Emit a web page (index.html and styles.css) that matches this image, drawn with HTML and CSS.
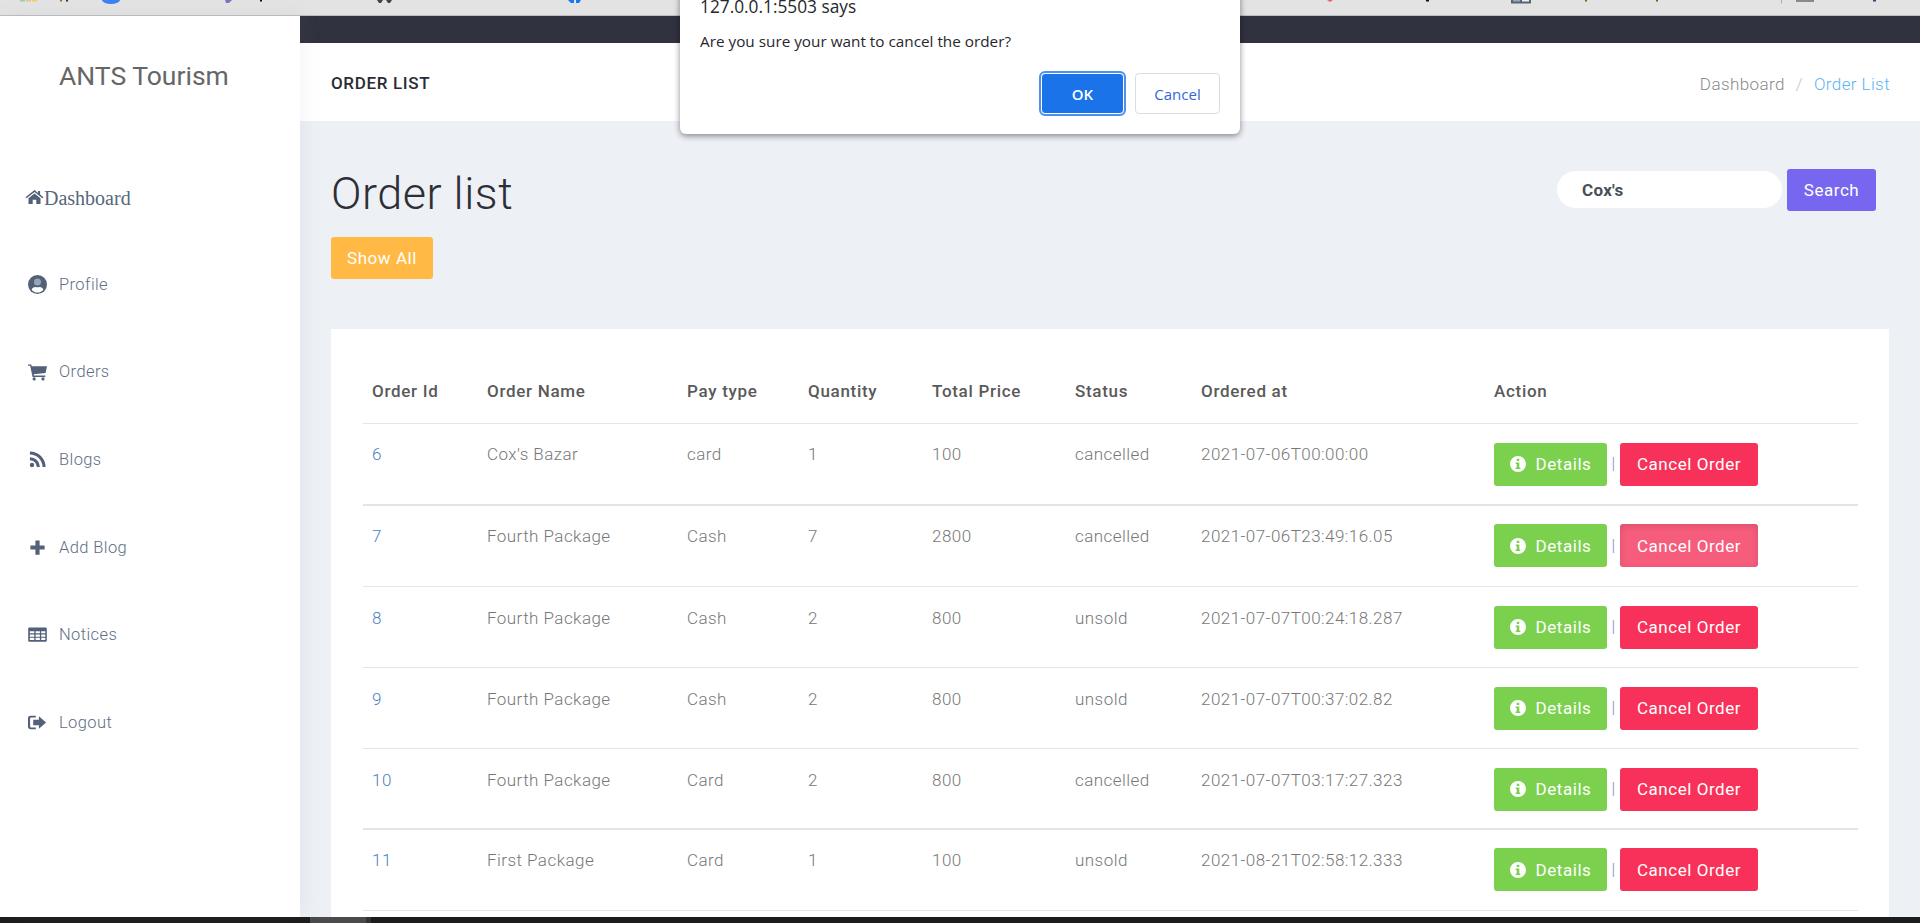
FILE: index.html
```html
<!DOCTYPE html>
<html lang="en">
<head>
<meta charset="utf-8">
<title>Order list</title>
<link rel="stylesheet" href="styles.css">
</head>
<body>
<div class="chrome">
  <svg class="chrome-art" width="1920" height="15" viewBox="0 0 1920 15">
    <rect x="20" y="0" width="5" height="1.5" fill="#9ccf9f"/><rect x="26" y="0" width="5" height="1.5" fill="#f5c07a"/><rect x="32" y="0" width="5" height="1.5" fill="#f4cf6a"/>
    <rect x="60" y="0" width="2" height="1.5" fill="#a56a20"/><rect x="66" y="0" width="2" height="1.5" fill="#333"/>
    <path d="M102 0h18a9 4 0 0 1-18 0z" fill="#3b82f6"/>
    <path d="M225 0h7l-3 3h-3z" fill="#7a78c0"/>
    <rect x="260" y="0" width="2" height="1.5" fill="#111"/>
    <path d="M377 0h6l-2 3h-2zM386 0h6l-2 3h-2z" fill="#444"/>
    <path d="M568 0h6v3h-3zM576 0h5l-2 3h-3z" fill="#1877f2"/>
    <path d="M1327 0h6l-3 2z" fill="#f0606a"/>
    <rect x="1426" y="0" width="3" height="1.5" fill="#111"/>
    <rect x="1511" y="0" width="20" height="3.5" fill="#566475"/><rect x="1513" y="0" width="7" height="1.5" fill="#9aa7b5"/><rect x="1522" y="0" width="7" height="1.5" fill="#eee"/>
    <rect x="1585" y="0" width="2" height="1.5" fill="#8a5a10"/>
    <rect x="1656" y="0" width="2" height="1.5" fill="#8a5a10"/>
    <rect x="1781" y="0" width="1" height="3.5" fill="#aaa"/>
    <rect x="1796" y="0" width="18" height="2" fill="#8a8a8a"/>
    <rect x="1873" y="0" width="3" height="1.5" fill="#264a7a"/>
  </svg>
</div>

<div class="app">
  <aside class="sidebar">
    <div class="brand">ANTS Tourism</div>
    <nav class="nav">
      <a class="nav-dash">
        <svg class="i-home" viewBox="0 0 18 14"><path d="M9 0 L12.6 2.9 V1 H14.6 V4.5 L18 7.2 L17 8.2 L9 1.9 L1 8.2 L0 7.2 Z M3 8.2 L9 3.4 L15 8.2 V14 H10.8 V9.8 H7.2 V14 H3 Z"/></svg>Dashboard
      </a>
      <a class="nav-item nav-profile">
        <svg class="ico" viewBox="0 0 20 20"><circle cx="10" cy="10" r="10"/><circle class="ico-head" cx="10" cy="7.300" r="3.700"/><path class="ico-cut" d="M3.900 15.400c1.300 1.900 3.500 3 6.100 3s4.800-1.100 6.100-3c-.5-1.800-2-2.900-3.800-2.900c-.7.3-1.400.5-2.300.5s-1.600-.2-2.300-.5c-1.800 0-3.300 1.100-3.800 2.900z"/></svg>
        <span>Profile</span>
      </a>
      <a class="nav-item">
        <svg class="ico" viewBox="0 0 20 20"><path d="M0 2.500h3.400l.6 1.900H20l-1.500 7.300-12.600 1.200.4 1.400h11.900v1.500H4.800L2.300 4H0z"/><circle cx="6.500" cy="17.800" r="1.700"/><circle cx="15.800" cy="17.800" r="1.700"/></svg>
        <span>Orders</span>
      </a>
      <a class="nav-item">
        <svg class="ico" viewBox="0 0 20 20"><circle cx="4.200" cy="15.800" r="2.300"/><path d="M2 7.500a10.500 10.500 0 0 1 10.500 10.500H9.300A7.300 7.300 0 0 0 2 10.700z"/><path d="M2 1.500A16.500 16.500 0 0 1 18.500 18h-3.200A13.300 13.300 0 0 0 2 4.700z"/></svg>
        <span>Blogs</span>
      </a>
      <a class="nav-item">
        <svg class="ico" viewBox="0 0 20 20"><path d="M7.800 2.500h4.400v5.300h5.300v4.400h-5.300v5.300H7.800v-5.300H2.500V7.800h5.300z"/></svg>
        <span>Add Blog</span>
      </a>
      <a class="nav-item">
        <svg class="ico" viewBox="0 0 20 20"><path fill-rule="evenodd" d="M1.500 2.500h17a1.300 1.300 0 0 1 1.300 1.300v12.400a1.300 1.300 0 0 1-1.300 1.300h-17A1.300 1.300 0 0 1 .200 16.200V3.800a1.300 1.300 0 0 1 1.300-1.300zM1.900 6.500v2.300h4.700V6.500zM8 6.500v2.300h4.500V6.500zM13.900 6.500v2.300h4.300V6.500zM1.900 10v2.300h4.700V10zM8 10v2.300h4.500V10zM13.900 10v2.300h4.300V10zM1.900 13.500v2.300h4.700v-2.300zM8 13.500v2.300h4.500v-2.300zM13.900 13.500v2.300h4.300v-2.300z"/></svg>
        <span>Notices</span>
      </a>
      <a class="nav-item">
        <svg class="ico" viewBox="0 0 20 20"><path d="M2.800 3h5.400v1.800H3.200a1 1 0 0 0-1 1v8.400a1 1 0 0 0 1 1h5v1.800H2.800A2.800 2.800 0 0 1 0 14.200V5.800A2.800 2.800 0 0 1 2.800 3z"/><path d="M11.500 3.500 19 10l-7.500 6.500v-3.700H5.500V7.200h6z"/></svg>
        <span>Logout</span>
      </a>
    </nav>
  </aside>

  <main class="main">
    <div class="topbar"></div>
    <header class="pagebar">
      <h4 class="pagebar-title">ORDER LIST</h4>
      <div class="crumbs"><span class="crumb">Dashboard</span><span class="crumb-sep">/</span><span class="crumb-active">Order List</span></div>
    </header>
    <section class="content">
      <div class="content-head">
        <div class="head-left">
          <h1 class="title">Order list</h1>
          <button class="btn btn-warning">Show All</button>
        </div>
        <form class="search">
          <input class="search-input" value="Cox's">
          <button class="btn btn-search" type="button">Search</button>
        </form>
      </div>
      <div class="card">
        <table class="table">
          <colgroup>
            <col class="c1"><col class="c2"><col class="c3"><col class="c4"><col class="c5"><col class="c6"><col class="c7"><col class="c8">
          </colgroup>
          <thead>
            <tr><th>Order Id</th><th>Order Name</th><th>Pay type</th><th>Quantity</th><th>Total Price</th><th>Status</th><th>Ordered at</th><th>Action</th></tr>
          </thead>
          <tbody>
            <tr><td class="id">6</td><td>Cox's Bazar</td><td>card</td><td>1</td><td>100</td><td>cancelled</td><td>2021-07-06T00:00:00</td><td class="act"><div class="actions"><button class="btn btn-success"><svg class="i-info" viewBox="0 0 16 16"><path fill-rule="evenodd" d="M8 0a8 8 0 1 1 0 16A8 8 0 0 1 8 0zM6.700 2.700v2.300h2.600V2.700zM5.700 6.400v1.500h1v3.500h-1v1.500h4.600v-1.500h-1V6.400z"/></svg>Details</button><span class="bar">|</span><button class="btn btn-danger">Cancel Order</button></div></td></tr>
            <tr class="thick"><td class="id">7</td><td>Fourth Package</td><td>Cash</td><td>7</td><td>2800</td><td>cancelled</td><td>2021-07-06T23:49:16.05</td><td class="act"><div class="actions"><button class="btn btn-success"><svg class="i-info" viewBox="0 0 16 16"><path fill-rule="evenodd" d="M8 0a8 8 0 1 1 0 16A8 8 0 0 1 8 0zM6.700 2.700v2.300h2.600V2.700zM5.700 6.400v1.500h1v3.500h-1v1.500h4.600v-1.500h-1V6.400z"/></svg>Details</button><span class="bar">|</span><button class="btn btn-danger btn-pressed">Cancel Order</button></div></td></tr>
            <tr><td class="id">8</td><td>Fourth Package</td><td>Cash</td><td>2</td><td>800</td><td>unsold</td><td>2021-07-07T00:24:18.287</td><td class="act"><div class="actions"><button class="btn btn-success"><svg class="i-info" viewBox="0 0 16 16"><path fill-rule="evenodd" d="M8 0a8 8 0 1 1 0 16A8 8 0 0 1 8 0zM6.700 2.700v2.300h2.600V2.700zM5.700 6.400v1.500h1v3.500h-1v1.500h4.600v-1.500h-1V6.400z"/></svg>Details</button><span class="bar">|</span><button class="btn btn-danger">Cancel Order</button></div></td></tr>
            <tr><td class="id">9</td><td>Fourth Package</td><td>Cash</td><td>2</td><td>800</td><td>unsold</td><td>2021-07-07T00:37:02.82</td><td class="act"><div class="actions"><button class="btn btn-success"><svg class="i-info" viewBox="0 0 16 16"><path fill-rule="evenodd" d="M8 0a8 8 0 1 1 0 16A8 8 0 0 1 8 0zM6.700 2.700v2.300h2.600V2.700zM5.700 6.400v1.500h1v3.500h-1v1.500h4.600v-1.500h-1V6.400z"/></svg>Details</button><span class="bar">|</span><button class="btn btn-danger">Cancel Order</button></div></td></tr>
            <tr><td class="id">10</td><td>Fourth Package</td><td>Card</td><td>2</td><td>800</td><td>cancelled</td><td>2021-07-07T03:17:27.323</td><td class="act"><div class="actions"><button class="btn btn-success"><svg class="i-info" viewBox="0 0 16 16"><path fill-rule="evenodd" d="M8 0a8 8 0 1 1 0 16A8 8 0 0 1 8 0zM6.700 2.700v2.300h2.600V2.700zM5.700 6.400v1.500h1v3.500h-1v1.500h4.600v-1.500h-1V6.400z"/></svg>Details</button><span class="bar">|</span><button class="btn btn-danger">Cancel Order</button></div></td></tr>
            <tr class="thick"><td class="id">11</td><td>First Package</td><td>Card</td><td>1</td><td>100</td><td>unsold</td><td>2021-08-21T02:58:12.333</td><td class="act"><div class="actions"><button class="btn btn-success"><svg class="i-info" viewBox="0 0 16 16"><path fill-rule="evenodd" d="M8 0a8 8 0 1 1 0 16A8 8 0 0 1 8 0zM6.700 2.700v2.300h2.600V2.700zM5.700 6.400v1.500h1v3.500h-1v1.500h4.600v-1.500h-1V6.400z"/></svg>Details</button><span class="bar">|</span><button class="btn btn-danger">Cancel Order</button></div></td></tr>
          </tbody>
        </table>
      </div>
    </section>
  </main>
</div>

<div class="taskbar"><span class="thumb"></span><span class="thumb-end"></span></div>

<div class="dialog">
  <div class="dialog-origin">127.0.0.1:5503 says</div>
  <div class="dialog-msg">Are you sure your want to cancel the order?</div>
  <div class="dialog-actions">
    <button class="dlg-btn dlg-ok">OK</button>
    <button class="dlg-btn dlg-cancel">Cancel</button>
  </div>
</div>
</body>
</html>
```

FILE: styles.css
```css
* { box-sizing: border-box; }
html, body { height: 100%; }
body {
  margin: 0;
  overflow: hidden;
  display: flex;
  flex-direction: column;
  font-family: Roboto, "Liberation Sans", sans-serif;
  font-weight: 300;
  font-size: 16px;
  color: #777;
  background: #edf0f5;
}
.chrome {
  height: 16px;
  flex: none;
  background: #e3e3e3;
  border-bottom: 1px solid #bdbdbd;
}
.chrome-art { display: block; }
.app { flex: 1; display: flex; min-height: 0; }
.sidebar {
  width: 300px;
  flex: none;
  background: #fff;
  box-shadow: 4px 0 18px rgba(120, 130, 150, .08);
  position: relative;
  z-index: 1;
}
.brand {
  padding: 42px 0 0 59px;
  font-size: 26.500px;
  line-height: 36px;
  font-weight: 400;
  color: #666;
}
.nav { display: flex; flex-direction: column; padding-top: 92px; }
.nav-dash {
  display: flex;
  align-items: center;
  height: 24px;
  padding-left: 25px;
  font-family: "Liberation Serif", serif;
  font-size: 20px;
  font-weight: 400;
  color: #57667d;
  fill: #526078;
}
.i-home { width: 19px; height: 14px; flex: none; margin-top: -3px; }
.nav-profile { margin-top: 62px; }
.nav-item {
  display: flex;
  align-items: center;
  height: 24px;
  margin-bottom: 63.700px;
  padding-left: 28px;
  color: #5e6e85;
  font-size: 16.500px;
  letter-spacing: .4px;
  fill: #526078;
}
.ico { width: 19px; height: 19px; flex: none; margin-right: 12px; }
.ico-head { fill: #9aa5b4; }
.ico-cut { fill: #fff; }
.main { flex: 1; min-width: 0; display: flex; flex-direction: column; }
.topbar { height: 27px; flex: none; background: #31323f; }
.pagebar {
  height: 78px;
  flex: none;
  background: #fff;
  display: flex;
  justify-content: space-between;
  padding: 0 30px 0 31px;
}
.pagebar-title {
  margin: 30px 0 0;
  font-size: 17px;
  line-height: 20px;
  font-weight: 500;
  letter-spacing: .65px;
  color: #2b2b33;
}
.crumbs { display: flex; padding-top: 31px; line-height: 20px; font-size: 17px; letter-spacing: .4px; }
.crumb { color: #8a8a8a; }
.crumb-sep { color: #c3c3cc; margin: 0 11px; }
.crumb-active { color: #5cb3f5; }
.content { flex: 1; padding: 0 31px; min-height: 0; }
.content-head { display: flex; justify-content: space-between; height: 208px; }
.title {
  margin: 47px 0 0;
  font-size: 45px;
  line-height: 52px;
  font-weight: 300;
  letter-spacing: .5px;
  color: #2e2e36;
}
.btn {
  border: 0;
  border-radius: 3px;
  color: #fff;
  font-family: inherit;
  font-weight: 400;
  font-size: 17px;
  letter-spacing: .55px;
  height: 43px;
  padding: 0;
}
.btn-warning { background: #ffb944; width: 102px; height: 42px; margin-top: 17px; display: block; }
.search { display: flex; align-items: flex-start; gap: 5px; padding: 48px 13px 0 0; }
.search-input {
  width: 225px;
  height: 37px;
  margin-top: 2px;
  border: 0;
  border-radius: 19px;
  background: #fff;
  padding: 0 25px;
  font: 700 17px Roboto, sans-serif;
  letter-spacing: .3px;
  color: #495057;
}
.btn-search { background: #7766f0; width: 89px; height: 42px; }
.card { background: #fff; padding: 32px 31px 0 32px; height: 620px; }
.table { width: 1495px; border-collapse: collapse; table-layout: fixed; }
.c1 { width: 115px; } .c2 { width: 200px; } .c3 { width: 121px; } .c4 { width: 124px; }
.c5 { width: 143px; } .c6 { width: 126px; } .c7 { width: 293px; } .c8 { width: 373px; }
th {
  height: 62px;
  padding: 0 0 2px 9px;
  text-align: left;
  font-weight: 500;
  color: #5a5a5a;
  font-size: 17px;
  letter-spacing: .7px;
}
td {
  height: 81px;
  padding: 21px 0 0 9px;
  vertical-align: top;
  border-top: 1px solid #e4e6e9;
  line-height: 20px;
  font-size: 17px;
  letter-spacing: .45px;
}
tbody tr:first-child td { height: 82px; padding-top: 20px; }
tr.thick td { border-top: 2px solid #e2e4e8; padding-top: 20px; }
tbody tr:last-child td { border-bottom: 1px solid #e4e6e9; }
td.id { color: #4a7fc0; }
td.act, tbody tr:first-child td.act { padding-top: 19px; }
tr.thick td.act { padding-top: 18px; }
.actions { display: flex; align-items: center; }
.btn-success { background: #7bd04e; width: 113px; display: flex; align-items: center; justify-content: center; }
.i-info { width: 16px; height: 16px; fill: #fff; margin-right: 10px; }
.bar { width: 13px; text-align: center; color: #6d8fb5; font-size: 16px; }
.btn-danger { background: #f73159; width: 138px; }
.btn-pressed { background: #f65c7b; box-shadow: inset 0 2px 6px rgba(0,0,0,.12); }
.taskbar { height: 6px; flex: none; background: #1c1c1c; padding-left: 310px; display: flex; }
.thumb { width: 56px; background: #4b4b4b; }
.thumb-end { width: 5px; background: #333; }
.dialog {
  position: absolute;
  left: 680px;
  top: -8px;
  width: 560px;
  height: 142px;
  background: #fff;
  border-radius: 0 0 6px 6px;
  box-shadow: 0 2px 6px rgba(0,0,0,.45);
  padding: 0 20px;
  font-family: "Open Sans", "Noto Sans", sans-serif;
  font-weight: 400;
  color: #26282c;
  z-index: 5;
}
.dialog-origin { margin-top: 5px; font-size: 17.300px; line-height: 20px; }
.dialog-msg { margin-top: 15px; font-size: 15.300px; line-height: 18px; }
.dialog-actions { display: flex; justify-content: flex-end; gap: 11px; margin-top: 23px; }
.dlg-btn {
  width: 85px;
  height: 41px;
  border-radius: 4px;
  font-family: inherit;
  font-size: 15px;
  font-weight: 600;
  padding: 0;
}
.dlg-ok { background: #1a73e8; color: #fff; border: 1px solid #fff; outline: 2px solid #4d90f0; width: 83px; margin-left: 1px; }
.dlg-cancel { background: #fff; color: #3367d6; border: 1px solid #dadce0; font-weight: 400; }
```
